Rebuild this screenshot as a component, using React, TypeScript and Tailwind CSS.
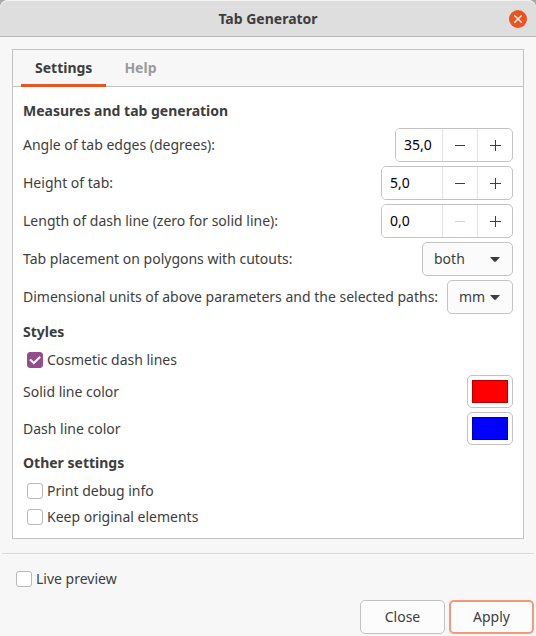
import { useState } from "react";
import type { ReactNode } from "react";

type SpinProps = {
  id: string;
  label: string;
  initial: number;
  inputClass: string;
};

const format = (value: number) => value.toFixed(1).replace(".", ",");

function Heading({ children }: { children: ReactNode }) {
  return <h2 className="mb-px flex h-7 items-center font-bold">{children}</h2>;
}

function SpinRow({ id, label, initial, inputClass }: SpinProps) {
  const [value, setValue] = useState(initial);

  return (
    <div className="flex items-center justify-between">
      <label htmlFor={id}>{label}</label>
      <div className="flex h-[34px] overflow-hidden rounded-[5px] border border-[#c3c3c3] bg-white">
        <input
          id={id}
          type="text"
          value={format(value)}
          onChange={(e) => setValue(parseFloat(e.target.value.replace(",", ".")) || 0)}
          className={`${inputClass} bg-white pl-2 text-black outline-none`}
        />
        <button
          type="button"
          aria-label={`Decrease ${label}`}
          disabled={value <= 0}
          onClick={() => setValue(Math.max(0, value - 1))}
          className="flex w-[35px] items-center justify-center border-l border-[#e4e4e4] disabled:text-[#d4d4d4]"
        >
          <svg width="11" height="11" viewBox="0 0 11 11" stroke="currentColor">
            <path d="M0 5.5h10" />
          </svg>
        </button>
        <button
          type="button"
          aria-label={`Increase ${label}`}
          onClick={() => setValue(value + 1)}
          className="flex w-[35px] items-center justify-center border-l border-[#e4e4e4]"
        >
          <svg width="11" height="11" viewBox="0 0 11 11" stroke="currentColor">
            <path d="M0 5.5h11M5.5 0v11" />
          </svg>
        </button>
      </div>
    </div>
  );
}

type SelectProps = {
  id: string;
  label: string;
  options: string[];
  selectClass: string;
};

function SelectRow({ id, label, options, selectClass }: SelectProps) {
  return (
    <div className="flex items-center justify-between">
      <label htmlFor={id} className="whitespace-nowrap">
        {label}
      </label>
      <div className="relative shrink-0">
        <select
          id={id}
          className={`${selectClass} block h-[34px] appearance-none rounded-[5px] border border-[#c3c3c3] bg-[#fbfbfb] pl-[11px] outline-none`}
        >
          {options.map((option) => (
            <option key={option}>{option}</option>
          ))}
        </select>
        <svg
          width="10"
          height="5"
          viewBox="0 0 10 5"
          fill="currentColor"
          className="pointer-events-none absolute top-[15px] right-[13px]"
        >
          <path d="M0 0h10L6 4.4Q5 5.3 4 4.4Z" />
        </svg>
      </div>
    </div>
  );
}

function CheckRow({ label, checked = false }: { label: string; checked?: boolean }) {
  return (
    <label className="flex h-[26px] items-center gap-1">
      <span className="relative block size-4">
        <input
          type="checkbox"
          defaultChecked={checked}
          className="peer block size-4 appearance-none rounded-[3px] border border-[#b8b8b8] bg-white checked:border-[#924d8b] checked:bg-[#924d8b]"
        />
        <svg
          width="16"
          height="16"
          viewBox="0 0 16 16"
          fill="none"
          stroke="white"
          strokeWidth="2"
          className="pointer-events-none absolute inset-0 hidden peer-checked:block"
        >
          <path d="M3 7.5L6.8 11L13.2 4.8" />
        </svg>
      </span>
      {label}
    </label>
  );
}

function ColorRow({ id, label, color }: { id: string; label: string; color: string }) {
  return (
    <div className="flex items-center justify-between">
      <label htmlFor={id}>{label}</label>
      <input
        id={id}
        type="color"
        defaultValue={color}
        className="block h-[33px] w-[46px] appearance-none rounded-[5px] border border-[#c3c3c3] bg-[#fdfdfd] p-1 [&::-webkit-color-swatch]:rounded-none [&::-webkit-color-swatch]:border-black/30 [&::-webkit-color-swatch-wrapper]:p-0"
      />
    </div>
  );
}

export default function App() {
  const [tab, setTab] = useState("Settings");

  return (
    <div className="bg-[#a9a9a9] font-['Noto_Sans',sans-serif] text-sm leading-5 text-[#3d3d3d]">
      <div className="min-h-screen rounded-t-lg bg-[#f7f7f7]">
        <header className="grid h-[37px] grid-cols-[1fr_auto_1fr] items-center rounded-t-lg border-t border-b border-t-[#f4f4f4] border-b-[#b8b8b8] bg-[#dedede] px-[9px]">
          <h1 className="col-start-2 font-bold">Tab Generator</h1>
          <button
            type="button"
            aria-label="Close window"
            className="flex size-[18px] items-center justify-center justify-self-end rounded-full bg-[#e95420] text-white"
          >
            <svg width="8" height="8" viewBox="0 0 8 8" stroke="currentColor" strokeWidth="1.3">
              <path d="M0.3 0.3l7.4 7.4M7.7 0.3L0.3 7.7" />
            </svg>
          </button>
        </header>

        <main className="mx-3 mt-3 border border-[#c3c3c3] bg-white">
          <div role="tablist" className="flex h-[37px] gap-1 border-b border-[#c3c3c3] bg-[#f7f7f7] px-2">
            {["Settings", "Help"].map((name) => (
              <button
                key={name}
                type="button"
                role="tab"
                aria-selected={tab === name}
                onClick={() => setTab(name)}
                className="-mb-px border-b-3 border-transparent px-[14px] pt-[2px] font-bold text-[#9b9b9b] aria-selected:border-[#e95420] aria-selected:text-[#3d3d3d]"
              >
                {name}
              </button>
            ))}
          </div>

          <div className="px-[10px] pt-[10px] pb-2">
            <Heading>Measures and tab generation</Heading>
            <div className="mt-[3px] flex flex-col gap-1">
              <SpinRow id="angle" label="Angle of tab edges (degrees):" initial={35} inputClass="w-[46px]" />
              <SpinRow id="height" label="Height of tab:" initial={5} inputClass="w-[60px]" />
              <SpinRow id="dash" label="Length of dash line (zero for solid line):" initial={0} inputClass="w-[60px]" />
              <SelectRow
                id="placement"
                label="Tab placement on polygons with cutouts:"
                options={["both", "inside", "outside"]}
                selectClass="w-[91px]"
              />
              <SelectRow
                id="units"
                label="Dimensional units of above parameters and the selected paths:"
                options={["mm", "cm", "in", "pt", "px"]}
                selectClass="w-[66px]"
              />
            </div>

            <div className="mt-1">
              <Heading>Styles</Heading>
              <div className="pl-1">
                <CheckRow label="Cosmetic dash lines" checked />
              </div>
              <div className="mt-[2px] flex flex-col gap-1">
                <ColorRow id="solid-color" label="Solid line color" color="#ff0000" />
                <ColorRow id="dash-color" label="Dash line color" color="#0000ff" />
              </div>
            </div>

            <div className="mt-1">
              <Heading>Other settings</Heading>
              <div className="pl-1">
                <CheckRow label="Print debug info" />
                <CheckRow label="Keep original elements" />
              </div>
            </div>
          </div>
        </main>

        <footer className="mx-[2px] mt-[14px] border-t border-[#dcdcdc] pt-3 pb-[2px]">
          <div className="pl-[14px]">
            <CheckRow label="Live preview" />
          </div>
          <div className="mt-2 flex justify-end gap-1">
            <button type="button" className="h-[34px] w-[85px] rounded-[5px] border border-[#c3c3c3] bg-[#fcfcfc]">
              Close
            </button>
            <button type="button" className="h-[34px] w-[85px] rounded-[5px] border-2 border-[#f0997b] bg-[#fcfcfc]">
              Apply
            </button>
          </div>
        </footer>
      </div>
    </div>
  );
}
